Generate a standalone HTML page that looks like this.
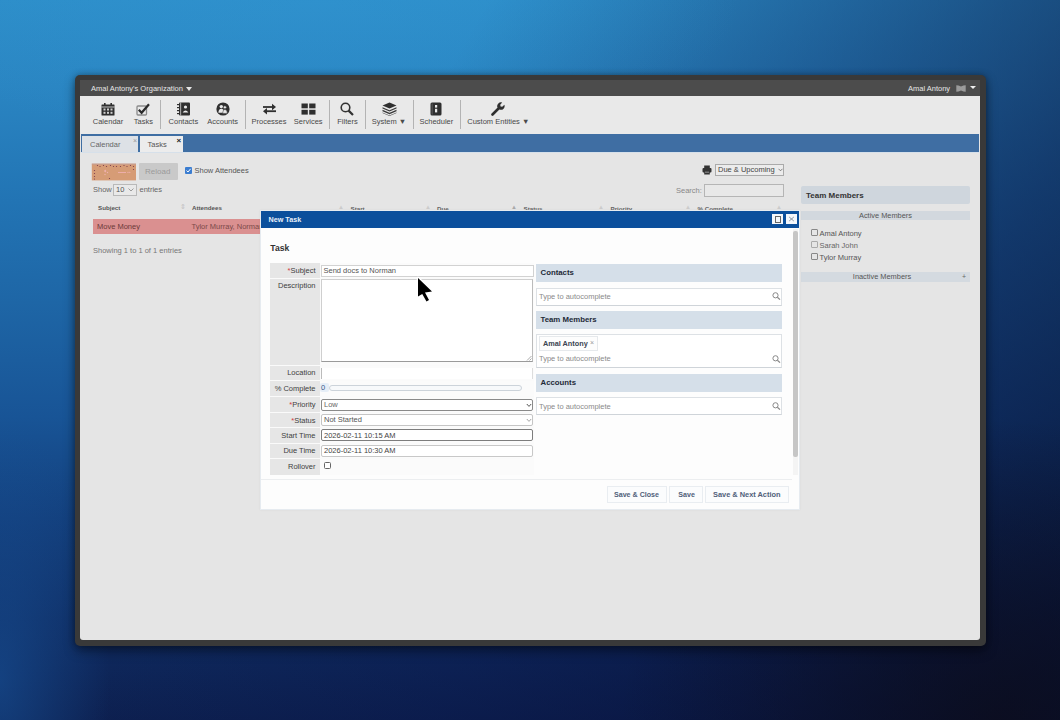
<!DOCTYPE html>
<html><head><meta charset="utf-8">
<style>
*{box-sizing:border-box;margin:0;padding:0}
html,body{width:1060px;height:720px;overflow:hidden}
body{position:relative;font-family:"Liberation Sans",sans-serif;font-size:7.5px;color:#444;
background:
radial-gradient(ellipse 110px 260px at 0px 680px,rgba(24,84,155,.6),rgba(24,84,155,0) 100%),
radial-gradient(ellipse 380px 300px at 1000px 720px,rgba(12,12,26,.75),rgba(12,12,26,0) 100%),
linear-gradient(120deg,rgba(8,20,70,0) 0%,rgba(8,20,70,0) 33%,rgba(8,20,70,.35) 58%,rgba(8,18,60,.6) 78%,rgba(6,12,40,.75) 100%),
linear-gradient(180deg,#2d8ec9 0%,#2a85c2 12%,#2274b4 28%,#1e66a6 42%,#185496 58%,#133f7c 72%,#0f2c62 86%,#0d2050 100%)}
.a{position:absolute}
.t{position:absolute;white-space:nowrap;line-height:1}
#bg2{left:0;top:0;width:1060px;height:720px;background:radial-gradient(ellipse 40% 22% at 30% 0%,rgba(50,150,212,.35),rgba(50,150,212,0) 100%)}
#frame{left:75px;top:75px;width:911px;height:571px;background:#393939;border-radius:5px;box-shadow:0 5px 12px rgba(0,0,0,.4),0 0 6px rgba(0,0,0,.3)}
#hdr{left:80px;top:80px;width:900px;height:16px;background:#4c4c4c}
#tb{left:80px;top:96px;width:900px;height:38px;background:#e9e9e9}
#content{left:80px;top:134px;width:900px;height:506px;background:#e5e5e5;border-radius:0 0 3px 3px}
#tabbar{left:81px;top:134px;width:898px;height:18px;background:#3f6ea3}
.lbl{color:#4a4a4a;text-align:center;width:70px;margin-left:-35px;top:118px}
.sep{top:100px;width:1px;height:29px;background:#b3b3b3}
.ic{position:absolute}
</style></head><body>
<div id="bg2" class="a"></div>
<div id="frame" class="a"></div>
<div id="hdr" class="a"></div>
<div class="t" style="left:91px;top:85px;color:#e6e6e6">Amal Antony's Organization</div>
<div class="a" style="left:186px;top:87px;width:0;height:0;border-left:3px solid transparent;border-right:3px solid transparent;border-top:4px solid #e6e6e6"></div>
<div class="t" style="left:908px;top:85px;color:#e6e6e6">Amal Antony</div>
<svg class="ic" style="left:956px;top:85px" width="10" height="7" viewBox="0 0 10 7"><path d="M0.3 0.3 Q2.5 0.3 5 1.6 Q7.5 0.3 9.7 0.3 L9.7 6.7 Q7.5 6.7 5 5.4 Q2.5 6.7 0.3 6.7 Z" fill="#9a9a9a"/></svg>
<div class="a" style="left:969.8px;top:85.8px;width:0;height:0;border-left:3px solid transparent;border-right:3px solid transparent;border-top:3.5px solid #f0f0f0"></div>

<div id="tb" class="a"></div>
<div id="content" class="a"></div>
<div id="tabbar" class="a"></div>
<!-- toolbar -->
<svg class="ic" style="left:101px;top:103px" width="14" height="13" viewBox="0 0 14 13"><rect x="0.5" y="1.5" width="13" height="11" rx="0.5" fill="#2f2f2f"/><rect x="3" y="0" width="1.6" height="3" fill="#2f2f2f"/><rect x="9.4" y="0" width="1.6" height="3" fill="#2f2f2f"/><rect x="0.5" y="3.6" width="13" height="0.8" fill="#e9e9e9"/><g fill="#cfcfcf"><rect x="2.5" y="5.5" width="2" height="2"/><rect x="6" y="5.5" width="2" height="2"/><rect x="9.5" y="5.5" width="2" height="2"/><rect x="2.5" y="8.8" width="2" height="2"/><rect x="6" y="8.8" width="2" height="2"/><rect x="9.5" y="8.8" width="2" height="2"/></g></svg>
<div class="t lbl" style="left:108px">Calendar</div>
<svg class="ic" style="left:136px;top:102px" width="14" height="14" viewBox="0 0 14 14"><rect x="1" y="4" width="9.5" height="9" rx="1" fill="none" stroke="#8a8a8a" stroke-width="1.3"/><path d="M2.8 7.8 L5.6 10.8 L13 2.2" fill="none" stroke="#2a2a2a" stroke-width="2.2"/></svg>
<div class="t lbl" style="left:143.4px">Tasks</div>
<div class="a sep" style="left:160px"></div>
<svg class="ic" style="left:177px;top:102px" width="14" height="14" viewBox="0 0 14 14"><rect x="2" y="0.5" width="11" height="13" rx="1" fill="#2f2f2f"/><g fill="#2f2f2f"><rect x="0" y="2" width="2.5" height="1.2"/><rect x="0" y="5" width="2.5" height="1.2"/><rect x="0" y="8" width="2.5" height="1.2"/><rect x="0" y="11" width="2.5" height="1.2"/></g><rect x="3.4" y="0.5" width="0.7" height="13" fill="#e9e9e9"/><circle cx="8.5" cy="5" r="1.6" fill="#e9e9e9"/><path d="M5.6 10.5 Q8.5 6.3 11.4 10.5 Z" fill="#e9e9e9"/></svg>
<div class="t lbl" style="left:183.4px">Contacts</div>
<svg class="ic" style="left:216px;top:102px" width="14" height="14" viewBox="0 0 14 14"><circle cx="7" cy="7" r="6.6" fill="#2f2f2f"/><circle cx="5.3" cy="4.6" r="1.7" fill="#e9e9e9"/><path d="M2.4 10.8 Q2.6 6.8 5.3 6.8 Q8 6.8 8.2 10.8 Z" fill="#e9e9e9"/><circle cx="8.9" cy="5.3" r="1.5" fill="#e9e9e9" stroke="#2f2f2f" stroke-width="0.5"/><path d="M6.6 11.4 Q6.8 7.6 8.9 7.4 Q11.2 7.6 11.4 11.4 Z" fill="#e9e9e9" stroke="#2f2f2f" stroke-width="0.5"/></svg>
<div class="t lbl" style="left:222.7px">Accounts</div>
<div class="a sep" style="left:245px"></div>
<svg class="ic" style="left:262px;top:103px" width="15" height="12" viewBox="0 0 15 12"><path d="M1 4 H11.5" stroke="#2f2f2f" stroke-width="1.8" fill="none"/><path d="M10 0.8 L14 4 L10 7.2 Z" fill="#2f2f2f"/><path d="M14 8.2 H3.5" stroke="#2f2f2f" stroke-width="1.8" fill="none"/><path d="M5 5 L1 8.2 L5 11.4 Z" fill="#2f2f2f"/></svg>
<div class="t lbl" style="left:269px">Processes</div>
<svg class="ic" style="left:301px;top:103px" width="15" height="12" viewBox="0 0 15 12"><g fill="#2f2f2f"><rect x="0.5" y="0.5" width="6.3" height="4.8"/><rect x="8.2" y="0.5" width="6.3" height="4.8"/><rect x="0.5" y="6.8" width="6.3" height="4.8"/><rect x="8.2" y="6.8" width="6.3" height="4.8"/></g></svg>
<div class="t lbl" style="left:308.2px">Services</div>
<div class="a sep" style="left:328.5px"></div>
<svg class="ic" style="left:340px;top:102px" width="14" height="14" viewBox="0 0 14 14"><circle cx="5.5" cy="5.5" r="4.3" fill="none" stroke="#333" stroke-width="1.6"/><path d="M8.6 8.6 L13 13" stroke="#333" stroke-width="2.2"/></svg>
<div class="t lbl" style="left:347.5px">Filters</div>
<div class="a sep" style="left:365px"></div>
<svg class="ic" style="left:382px;top:102px" width="15" height="14" viewBox="0 0 15 14"><path d="M7.5 0.5 L14.5 3.5 L7.5 6.5 L0.5 3.5 Z" fill="#2f2f2f"/><path d="M0.5 5.2 L7.5 8.2 L14.5 5.2 V6.6 L7.5 9.6 L0.5 6.6 Z" fill="#3a3a3a"/><path d="M0.5 7.8 L7.5 10.8 L14.5 7.8 V9.2 L7.5 12.2 L0.5 9.2 Z" fill="#3a3a3a"/><path d="M0.5 10.4 L7.5 13.4 L14.5 10.4 V11 L7.5 14 L0.5 11 Z" fill="#3a3a3a"/></svg>
<div class="t lbl" style="left:389px">System &#9660;</div>
<div class="a sep" style="left:412.5px"></div>
<svg class="ic" style="left:430px;top:102px" width="12" height="14" viewBox="0 0 12 14"><rect x="0.5" y="0.5" width="11" height="13" rx="1.5" fill="#2f2f2f"/><rect x="1.8" y="1.5" width="0.6" height="11" fill="#777"/><rect x="5" y="3" width="2.2" height="2.6" fill="#e9e9e9"/><rect x="5" y="6.8" width="2.2" height="3.6" fill="#e9e9e9"/></svg>
<div class="t lbl" style="left:436.4px">Scheduler</div>
<div class="a sep" style="left:460px"></div>
<svg class="ic" style="left:491px;top:102px" width="14" height="14" viewBox="0 0 14 14"><path d="M1.5 12.5 L7.5 6.5" stroke="#2f2f2f" stroke-width="2.6" stroke-linecap="round"/><path d="M6.3 5.2 A3.8 3.8 0 0 1 11.2 0.6 L9.2 2.8 L9.6 4.4 L11.2 4.8 L13.4 2.8 A3.8 3.8 0 0 1 8.8 7.7 Z" fill="#2f2f2f"/></svg>
<div class="t lbl" style="left:498.3px">Custom Entities &#9660;</div>


<!-- content controls -->
<svg class="ic" style="left:91px;top:163px" width="46" height="18" viewBox="0 0 46 18"><rect x="0.8" y="0.6" width="44.2" height="16.8" fill="#d69c76"/><rect x="0.8" y="0.6" width="44.2" height="1" fill="#b8a0a8" opacity=".6"/><g fill="#7a3a4a"><circle cx="6.5" cy="2.5" r="0.6"/><circle cx="9.0" cy="3.5" r="0.6"/><circle cx="12.5" cy="2.5" r="0.6"/><circle cx="15.5" cy="3.5" r="0.6"/><circle cx="19.5" cy="2.5" r="0.6"/><circle cx="22.5" cy="3.5" r="0.6"/><circle cx="25.5" cy="3.5" r="0.6"/><circle cx="29.5" cy="3.5" r="0.6"/><circle cx="33.0" cy="2.5" r="0.6"/><circle cx="36.0" cy="3.5" r="0.6"/><circle cx="39.5" cy="2.5" r="0.6"/><circle cx="42.5" cy="3.5" r="0.6"/><circle cx="3.5" cy="7.5" r="0.6"/><circle cx="3.5" cy="10.5" r="0.6"/><circle cx="3.5" cy="13.5" r="0.6"/><circle cx="3.5" cy="16.0" r="0.6"/><circle cx="18.5" cy="15.5" r="0.6"/><circle cx="42.5" cy="6.5" r="0.6"/></g><g fill="#f0b0b0"><path d="M13 8 l1.2 -1.5 l1.2 1.5 l-1.2 1.5 z"/><circle cx="16.5" cy="9.5" r="0.7"/><circle cx="14" cy="11.5" r="0.7"/><path d="M27 9 h8 v0.9 h-8 z"/><circle cx="37" cy="9.4" r="0.6"/><circle cx="38.8" cy="9.4" r="0.6"/></g></svg>

<div class="a" style="left:139px;top:163px;width:39px;height:17px;background:#c9c9c9;border-radius:1px"></div>
<div class="t" style="left:145px;top:167.5px;color:#9a9a9a;font-size:8px">Reload</div>
<div class="a" style="left:185px;top:167px;width:7px;height:7px;background:#3b7dd0;border-radius:1px"></div>
<svg class="ic" style="left:185px;top:167px" width="7" height="7" viewBox="0 0 7 7"><path d="M1.5 3.6 L3 5 L5.6 1.8" stroke="#fff" stroke-width="1" fill="none"/></svg>
<div class="t" style="left:194.5px;top:167px;color:#555">Show Attendees</div>
<div class="t" style="left:93px;top:186px;color:#666">Show</div>
<div class="a" style="left:113px;top:184px;width:24px;height:12px;border:1px solid #b9b9b9;background:#e9e9e9"></div>
<div class="t" style="left:116px;top:186px;color:#555">10</div>
<svg class="ic" style="left:128px;top:188px" width="6" height="4" viewBox="0 0 6 4"><path d="M0.5 0.5 L3 3 L5.5 0.5" stroke="#888" stroke-width="0.8" fill="none"/></svg>
<div class="t" style="left:139.5px;top:186px;color:#666">entries</div>

<div class="t" style="left:98px;top:204.5px;color:#555;font-weight:bold;font-size:6.2px">Subject</div>
<div class="t" style="left:179.5px;top:203px;color:#c0c0c0;font-size:7px">&#8661;</div>
<div class="t" style="left:192px;top:204.5px;color:#555;font-weight:bold;font-size:6.2px">Attendees</div>
<div class="t" style="left:338px;top:204px;color:#ccc;font-size:6px">&#9650;</div>
<div class="t" style="left:350.5px;top:205.5px;color:#666;font-weight:bold;font-size:6.2px">Start</div>
<div class="t" style="left:425px;top:204px;color:#ccc;font-size:6px">&#9650;</div>
<div class="t" style="left:437px;top:205.5px;color:#666;font-weight:bold;font-size:6.2px">Due</div>
<div class="t" style="left:511px;top:204px;color:#aaa;font-size:6px">&#9650;</div>
<div class="t" style="left:523.5px;top:205.5px;color:#666;font-weight:bold;font-size:6.2px">Status</div>
<div class="t" style="left:598px;top:204px;color:#ccc;font-size:6px">&#9650;</div>
<div class="t" style="left:610.5px;top:205.5px;color:#666;font-weight:bold;font-size:6.2px">Priority</div>
<div class="t" style="left:685px;top:204px;color:#ccc;font-size:6px">&#9650;</div>
<div class="t" style="left:697.5px;top:205.5px;color:#666;font-weight:bold;font-size:6.2px">% Complete</div>
<div class="t" style="left:776px;top:204px;color:#ccc;font-size:6px">&#9650;</div>
<div class="a" style="left:93px;top:219px;width:690px;height:15px;background:#da9090"></div>
<div class="t" style="left:97px;top:222.5px;color:#6a3a3a">Move Money</div>
<div class="t" style="left:191.5px;top:222.5px;color:#7a4a4a">Tylor Murray, Norman</div>
<div class="t" style="left:93px;top:247px;color:#777">Showing 1 to 1 of 1 entries</div>

<!-- print & filter select -->
<svg class="ic" style="left:702px;top:165px" width="10" height="10" viewBox="0 0 10 10"><rect x="2.2" y="0.5" width="5.6" height="3" fill="#333"/><rect x="0.5" y="3" width="9" height="4.5" rx="1" fill="#333"/><rect x="2.2" y="6" width="5.6" height="3.5" fill="#333"/><rect x="3" y="6.8" width="4" height="0.6" fill="#ddd"/></svg>
<div class="a" style="left:715px;top:163.5px;width:69px;height:12px;border:1px solid #aaa;background:#ececec"></div>
<div class="t" style="left:718px;top:165.5px;color:#444">Due &amp; Upcoming</div>
<svg class="ic" style="left:777.5px;top:168px" width="5" height="4" viewBox="0 0 5 4"><path d="M0.5 0.8 L2.5 2.8 L4.5 0.8" stroke="#666" stroke-width="0.8" fill="none"/></svg>
<div class="t" style="left:676px;top:186.5px;color:#888">Search:</div>
<div class="a" style="left:704px;top:184px;width:80px;height:13px;border:1px solid #b5b5b5;background:#e8e8e8"></div>

<!-- team members panel -->
<div class="a" style="left:801px;top:186px;width:169px;height:18px;background:#cfd6dd;border-radius:2px"></div>
<div class="t" style="left:806px;top:192px;color:#333;font-weight:bold;font-size:8px">Team Members</div>
<div class="a" style="left:801px;top:210.5px;width:169px;height:9.5px;background:#d2d8de"></div>
<div class="t" style="left:801px;width:169px;text-align:center;top:212px;color:#555;font-size:7.4px">Active Members</div>
<div class="a" style="left:811px;top:229px;width:7px;height:7px;border:1px solid #888;border-radius:1px"></div>
<div class="t" style="left:819.5px;top:229.5px;color:#555">Amal Antony</div>
<div class="a" style="left:811px;top:241px;width:7px;height:7px;border:1px solid #aaa;border-radius:1px"></div>
<div class="t" style="left:819.5px;top:241.5px;color:#666">Sarah John</div>
<div class="a" style="left:811px;top:253px;width:7px;height:7px;border:1px solid #888;border-radius:1px"></div>
<div class="t" style="left:819.5px;top:253.5px;color:#555">Tylor Murray</div>
<div class="a" style="left:801px;top:271.5px;width:169px;height:10px;background:#d4dae0"></div>
<div class="t" style="left:801px;width:162px;text-align:center;top:273px;color:#555;font-size:7.4px">Inactive Members</div>
<div class="t" style="left:962px;top:273px;color:#666;font-size:7px">+</div>

<!-- tabs -->
<div class="a" style="left:82px;top:136px;width:57px;height:16px;background:#dde1e6;border-right:1px solid #3f6ea3"></div>
<div class="t" style="left:90px;top:141px;color:#666">Calendar</div>
<div class="t" style="left:133px;top:137px;color:#999;font-size:7px">&#215;</div>
<div class="a" style="left:140px;top:136px;width:43px;height:17px;background:#ececec"></div>
<div class="t" style="left:147.5px;top:141px;color:#555">Tasks</div>
<div class="t" style="left:176.5px;top:137px;color:#222;font-size:8px;font-weight:bold">&#215;</div>
<div class="a" style="left:81px;top:152px;width:898px;height:1px;background:#d6e0ea"></div>


<!-- modal -->
<div class="a" style="left:260px;top:210px;width:540px;height:300px;background:#fdfdfd;border:1px solid #e6ebf0;box-shadow:0 0 2px rgba(0,0,0,.06)"></div>
<div class="a" style="left:261px;top:211px;width:538px;height:17px;background:#0b4f9c"></div>
<div class="t" style="left:268.5px;top:215.5px;color:#e8f0fa;font-weight:bold;font-size:7.2px">New Task</div>
<div class="a" style="left:772px;top:214px;width:10.5px;height:10px;background:#f4f7fb"></div>
<div class="a" style="left:774.5px;top:216px;width:6.5px;height:6.5px;border:1px solid #666"></div>
<div class="a" style="left:786px;top:214px;width:10.5px;height:10px;background:#f4f7fb"></div>
<svg class="ic" style="left:788px;top:216px" width="7" height="6" viewBox="0 0 7 6"><path d="M1.2 1 L5.8 5 M5.8 1 L1.2 5" stroke="#7a8898" stroke-width="0.9"/></svg>
<div class="t" style="left:270.3px;top:244px;color:#333;font-weight:bold;font-size:8.6px">Task</div>
<!-- scrollbar -->
<div class="a" style="left:792.5px;top:229px;width:5px;height:246px;background:#f4f4f4"></div>
<div class="a" style="left:793px;top:230.5px;width:4.5px;height:226.5px;background:#c6c6c6;border-radius:2px"></div>

<!-- form grid -->
<div class="a" style="left:269.5px;top:263px;width:264px;height:212px;background:#fbfbfb"></div>
<div class="a" style="left:269.5px;top:263px;width:50.5px;height:212px;background:#e6e6e6"></div>
<div class="t" style="left:269.5px;width:46px;text-align:right;top:266.5px;color:#3e3e3e"><span style="color:#d04040">*</span>Subject</div>
<div class="a" style="left:269.5px;top:277.5px;width:264px;height:1px;background:#fafafa"></div>
<div class="t" style="left:269.5px;width:46px;text-align:right;top:282.0px;color:#3e3e3e">Description</div>
<div class="a" style="left:269.5px;top:364.5px;width:264px;height:1px;background:#fafafa"></div>
<div class="t" style="left:269.5px;width:46px;text-align:right;top:369.0px;color:#3e3e3e">Location</div>
<div class="a" style="left:269.5px;top:379.5px;width:264px;height:1px;background:#fafafa"></div>
<div class="t" style="left:269.5px;width:46px;text-align:right;top:384.5px;color:#3e3e3e">% Complete</div>
<div class="a" style="left:269.5px;top:395.5px;width:264px;height:1px;background:#fafafa"></div>
<div class="t" style="left:269.5px;width:46px;text-align:right;top:401.0px;color:#3e3e3e"><span style="color:#d04040">*</span>Priority</div>
<div class="a" style="left:269.5px;top:411.5px;width:264px;height:1px;background:#fafafa"></div>
<div class="t" style="left:269.5px;width:46px;text-align:right;top:416.5px;color:#3e3e3e"><span style="color:#d04040">*</span>Status</div>
<div class="a" style="left:269.5px;top:426.5px;width:264px;height:1px;background:#fafafa"></div>
<div class="t" style="left:269.5px;width:46px;text-align:right;top:432.0px;color:#3e3e3e">Start Time</div>
<div class="a" style="left:269.5px;top:442.5px;width:264px;height:1px;background:#fafafa"></div>
<div class="t" style="left:269.5px;width:46px;text-align:right;top:447.0px;color:#3e3e3e">Due Time</div>
<div class="a" style="left:269.5px;top:457.5px;width:264px;height:1px;background:#fafafa"></div>
<div class="t" style="left:269.5px;width:46px;text-align:right;top:462.5px;color:#3e3e3e">Rollover</div>

<div class="a" style="left:321px;top:264.5px;width:212.5px;height:12px;background:#fff;border:1px solid #d2d2d2"></div>
<div class="t" style="left:323.5px;top:266.5px;color:#555">Send docs to Norman</div>
<div class="a" style="left:321px;top:279px;width:212px;height:82.5px;background:#fff;border:1px solid #cfcfcf;border-bottom:1px solid #9a9a9a;border-right:1px solid #bbb"></div>
<svg class="ic" style="left:526px;top:355px" width="6" height="6" viewBox="0 0 6 6"><path d="M5.5 1 L1 5.5 M5.5 3.5 L3.5 5.5" stroke="#888" stroke-width="0.7"/></svg>
<div class="a" style="left:321px;top:367.5px;width:212px;height:11px;background:#fff;border-left:1px solid #bbb;border-right:1px solid #ddd"></div>
<div class="a" style="left:319.5px;top:383px;width:9px;height:9px;background:#e6eef7;border-radius:2px"></div><div class="t" style="left:321px;top:384px;color:#3a5a8a">0</div>
<div class="a" style="left:329px;top:384.5px;width:193px;height:6px;background:#f7f9fb;border:1px solid #ccd3da;border-radius:3px"></div>
<div class="a" style="left:321px;top:398.5px;width:212px;height:12.5px;background:#fff;border:1px solid #8a8a8a;border-radius:2px"></div>
<div class="t" style="left:324px;top:401px;color:#666">Low</div>
<svg class="ic" style="left:525.5px;top:402.5px" width="6" height="5" viewBox="0 0 6 5"><path d="M0.8 1 L3 3.4 L5.2 1" stroke="#444" stroke-width="0.9" fill="none"/></svg>
<div class="a" style="left:321px;top:414px;width:212px;height:11.5px;background:#fff;border:1px solid #c5c5c5;border-radius:2px"></div>
<div class="t" style="left:324px;top:416px;color:#555">Not Started</div>
<svg class="ic" style="left:525.5px;top:417.5px" width="6" height="5" viewBox="0 0 6 5"><path d="M0.8 1 L3 3.4 L5.2 1" stroke="#999" stroke-width="0.9" fill="none"/></svg>
<div class="a" style="left:321px;top:429px;width:212px;height:12px;background:#fff;border:1px solid #7d7d7d;border-radius:2px"></div>
<div class="t" style="left:324px;top:431.5px;color:#444">2026-02-11 10:15 AM</div>
<div class="a" style="left:321px;top:444.5px;width:212px;height:12px;background:#fff;border:1px solid #c8c8c8;border-radius:2px"></div>
<div class="t" style="left:324px;top:447px;color:#444">2026-02-11 10:30 AM</div>
<div class="a" style="left:323.5px;top:462px;width:7px;height:7px;background:#fff;border:1px solid #666;border-radius:1.5px"></div>
<div class="a" style="left:261px;top:478.5px;width:531px;height:1px;background:#eceef0"></div>

<!-- right sections -->
<div class="a" style="left:536px;top:264px;width:246px;height:18px;background:#d5dfe9"></div>
<div class="t" style="left:540.5px;top:268.5px;color:#1e2a38;font-weight:bold;font-size:7.8px">Contacts</div>
<div class="a" style="left:535.5px;top:288px;width:246.5px;height:17.5px;background:#fff;border:1px solid #dde1e5;border-bottom-color:#cfd4d9"></div>
<div class="t" style="left:539px;top:293px;color:#8a8a8a">Type to autocomplete</div>
<svg class="ic" style="left:772px;top:292px" width="9" height="8" viewBox="0 0 9 8"><circle cx="3.5" cy="3.3" r="2.6" fill="none" stroke="#888" stroke-width="1"/><path d="M5.4 5.2 L8 7.6" stroke="#888" stroke-width="1.2"/></svg>
<div class="a" style="left:536px;top:311px;width:246px;height:18px;background:#d5dfe9"></div>
<div class="t" style="left:540.5px;top:315.5px;color:#1e2a38;font-weight:bold;font-size:7.8px">Team Members</div>
<div class="a" style="left:535.5px;top:334px;width:246.5px;height:34px;background:#fff;border:1px solid #dde1e5;border-bottom-color:#cfd4d9"></div>
<div class="a" style="left:539px;top:336px;width:59px;height:14.5px;background:#fdfdfd;border:1px solid #e6e9ec"></div>
<div class="t" style="left:543px;top:339.5px;color:#3a4452;font-weight:bold;font-size:7.3px">Amal Antony</div>
<div class="t" style="left:590px;top:339px;color:#999;font-size:7px">&#215;</div>
<div class="t" style="left:539px;top:355px;color:#8a8a8a">Type to autocomplete</div>
<svg class="ic" style="left:772px;top:355px" width="9" height="8" viewBox="0 0 9 8"><circle cx="3.5" cy="3.3" r="2.6" fill="none" stroke="#888" stroke-width="1"/><path d="M5.4 5.2 L8 7.6" stroke="#888" stroke-width="1.2"/></svg>
<div class="a" style="left:536px;top:374px;width:246px;height:18px;background:#d5dfe9"></div>
<div class="t" style="left:540.5px;top:378.5px;color:#1e2a38;font-weight:bold;font-size:7.8px">Accounts</div>
<div class="a" style="left:535.5px;top:397px;width:246.5px;height:17.5px;background:#fff;border:1px solid #dde1e5;border-bottom-color:#cfd4d9"></div>
<div class="t" style="left:539px;top:402.5px;color:#8a8a8a">Type to autocomplete</div>
<svg class="ic" style="left:772px;top:402px" width="9" height="8" viewBox="0 0 9 8"><circle cx="3.5" cy="3.3" r="2.6" fill="none" stroke="#888" stroke-width="1"/><path d="M5.4 5.2 L8 7.6" stroke="#888" stroke-width="1.2"/></svg>

<!-- footer buttons -->
<div class="a" style="left:606.5px;top:486px;width:60.5px;height:16.5px;background:#fbfcfd;border:1px solid #e9edf1"></div>
<div class="t" style="left:614px;top:491.6px;color:#50607a;font-weight:bold;font-size:7.1px">Save &amp; Close</div>
<div class="a" style="left:669px;top:486px;width:34px;height:16.5px;background:#fbfcfd;border:1px solid #e9edf1"></div>
<div class="t" style="left:678.3px;top:491.6px;color:#50607a;font-weight:bold;font-size:7.1px">Save</div>
<div class="a" style="left:704.5px;top:486px;width:84px;height:16.5px;background:#fbfcfd;border:1px solid #e9edf1"></div>
<div class="t" style="left:713px;top:490.6px;color:#50607a;font-weight:bold;font-size:7.4px">Save &amp; Next Action</div>

<!-- cursor -->
<svg class="ic" style="left:416px;top:276px" width="20" height="30" viewBox="0 0 20 30"><path d="M2 2 L2 20.5 L6.25 18 L10.5 25.5 L13 24 L9 16.5 L16 15.5 Z" fill="#000" stroke="#fff" stroke-width="2.6" stroke-linejoin="round" paint-order="stroke"/></svg>
</body></html>
